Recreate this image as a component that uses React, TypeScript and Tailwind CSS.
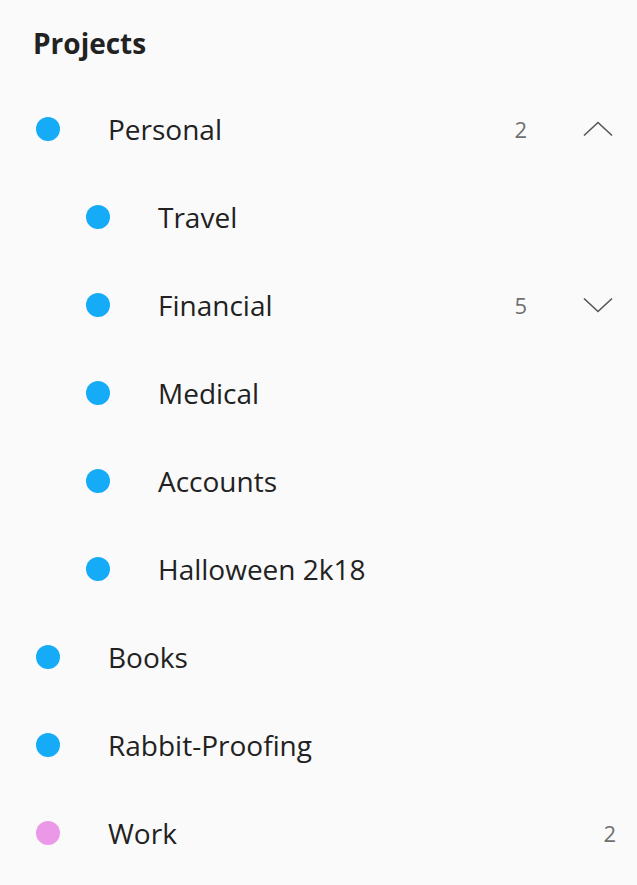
import React from "react";

type Item = {
  name: string;
  color: string;
  count?: number;
  chevron?: "up" | "down";
  level: 0 | 1;
};

const items: Item[] = [
  { name: "Personal", color: "#16abf6", count: 2, chevron: "up", level: 0 },
  { name: "Travel", color: "#16abf6", level: 1 },
  { name: "Financial", color: "#16abf6", count: 5, chevron: "down", level: 1 },
  { name: "Medical", color: "#16abf6", level: 1 },
  { name: "Accounts", color: "#16abf6", level: 1 },
  { name: "Halloween 2k18", color: "#16abf6", level: 1 },
  { name: "Books", color: "#16abf6", level: 0 },
  { name: "Rabbit-Proofing", color: "#16abf6", level: 0 },
  { name: "Work", color: "#ec98e9", count: 2, level: 0 },
];

function Chevron({ dir }: { dir: "up" | "down" }) {
  return (
    <svg width="30" height="16" viewBox="0 0 30 16" fill="none">
      {dir === "up" ? (
        <polyline points="1,14.5 15,1.5 29,14.5" stroke="#555" strokeWidth="1.6" />
      ) : (
        <polyline points="1,1.5 15,14.5 29,1.5" stroke="#555" strokeWidth="1.6" />
      )}
    </svg>
  );
}

export default function App() {
  return (
    <div
      className="w-[637px] h-[885px] bg-[#fafafa] text-[#1f1f1f] overflow-hidden"
      style={{ fontFamily: '"Open Sans", "Noto Sans", sans-serif' }}
    >
      <div className="h-[85px] flex items-center pl-[33px]">
        <h1 className="text-[28px] font-bold text-[#222]">Projects</h1>
      </div>
      <ul>
        {items.map((it) => (
          <li key={it.name} className="h-[88px] flex items-center">
            <div
              className={
                it.level === 0
                  ? "flex items-center pl-[36px] flex-1"
                  : "flex items-center pl-[86px] flex-1"
              }
            >
              <span
                className="w-6 h-6 rounded-full shrink-0"
                style={{ backgroundColor: it.color }}
              />
              <span className="ml-[48px] text-[28px] text-[#222]">{it.name}</span>
            </div>
            {it.count !== undefined && (
              <span
                className={
                  it.chevron
                    ? "text-[22px] text-[#707070] mr-[56px]"
                    : "text-[22px] text-[#707070] mr-[21px]"
                }
              >
                {it.count}
              </span>
            )}
            {it.chevron && (
              <span className="mr-[24px] flex items-center">
                <Chevron dir={it.chevron} />
              </span>
            )}
          </li>
        ))}
      </ul>
    </div>
  );
}
